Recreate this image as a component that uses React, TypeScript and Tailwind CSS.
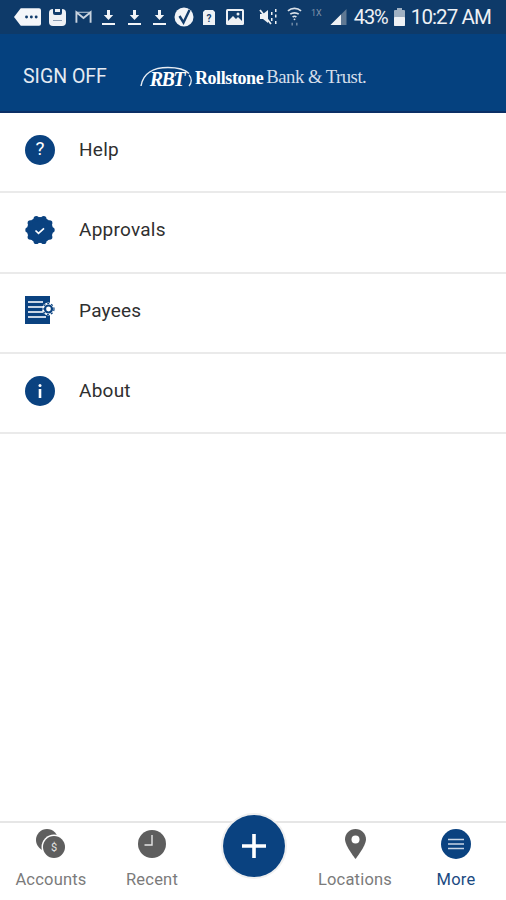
import React from "react";

const NAVY = "#0a4280";

function Download() {
  return (
    <svg width="15" height="17" viewBox="0 0 15 17" fill="#f1f4f8" className="shrink-0">
      <path d="M6 1h3v5h3.200L7.500 11 2.800 6H6z" />
      <rect x="1" y="14" width="13" height="2" />
    </svg>
  );
}

function StatusLeft() {
  return (
    <div className="flex shrink-0 items-center">
      <svg width="27" height="20" viewBox="0 0 28 20" className="ml-[14px] shrink-0">
        <path d="M7 1h19a2 2 0 0 1 2 2v14a2 2 0 0 1-2 2H7L0 10z" fill="#f4f6f9" />
        <circle cx="13" cy="10" r="1.500" fill="#123d6c" />
        <circle cx="18" cy="10" r="1.500" fill="#123d6c" />
        <circle cx="23" cy="10" r="1.500" fill="#123d6c" />
      </svg>
      <svg width="17" height="19" viewBox="0 0 17 19" className="ml-[8px] shrink-0">
        <rect x="0" y="1" width="17" height="17" rx="4" fill="#eef1f5" />
        <path d="M4 1h9v4a2 2 0 0 1-2 2H6a2 2 0 0 1-2-2z" fill="#123d6c" />
        <rect x="6" y="1" width="5" height="3" fill="#eef1f5" />
        <rect x="4" y="12" width="9" height="1" fill="#8b9db3" />
      </svg>
      <svg width="17" height="14" viewBox="0 0 18 14" className="ml-[9px] shrink-0" fill="none" stroke="#c9d3df" strokeWidth="2">
        <path d="M1.500 13V2l7.500 6 7.500-6v11" />
        <path d="M1.500 2h15" strokeWidth="1" />
      </svg>
      <div className="ml-[9px] flex w-[66px] shrink-0 justify-between">
        <Download />
        <Download />
        <Download />
      </div>
      <svg width="20" height="20" viewBox="0 0 20 20" className="ml-[7px] shrink-0">
        <circle cx="10" cy="10" r="9.500" fill="#f1f4f8" />
        <path d="M5.500 9l4 6.500L15.500 3" fill="none" stroke="#123d6c" strokeWidth="2.400" />
      </svg>
      <svg width="14" height="17" viewBox="0 0 14 17" className="ml-[8px] shrink-0">
        <path d="M3 1h8l2 2v13H1V3z" fill="#eef1f5" />
        <text x="7" y="13" fontSize="10" fontWeight="700" textAnchor="middle" fill="#123d6c" fontFamily="Roboto, sans-serif">?</text>
      </svg>
      <svg width="18" height="16" viewBox="0 0 18 16" className="ml-[10px] shrink-0">
        <rect x="0" y="0" width="18" height="16" rx="1.500" fill="#eef1f5" />
        <rect x="2" y="2" width="14" height="10" fill="#123d6c" />
        <path d="M2 12l5-5 3 3 2-2 4 4z" fill="#eef1f5" />
        <circle cx="12" cy="5" r="1.500" fill="#eef1f5" />
      </svg>
    </div>
  );
}

function StatusRight() {
  return (
    <div className="flex shrink-0 items-center whitespace-nowrap">
      <svg width="20" height="18" viewBox="0 0 20 18" fill="#eef1f5" className="shrink-0">
        <path d="M1 6h3l5-4v13l-5-4H1z" />
        <path d="M1 2l11 14" stroke="#eef1f5" strokeWidth="1.800" />
        <path d="M12 4h1.500v3H12zM12 10h1.500v3H12zM16 1h1.500v3H16zM16 6.500h1.500v3H16zM16 13h1.500v3H16z" />
      </svg>
      <svg width="15" height="22" viewBox="0 0 16 22" className="ml-[8px] shrink-0" fill="none" stroke="#d9e0e8" strokeWidth="1.800">
        <path d="M1 4.500c4-3.500 10-3.500 14 0" />
        <path d="M3.500 8c2.500-2 6.500-2 9 0" />
        <path d="M6 11c1-.8 3-.8 4 0" />
        <circle cx="8" cy="13.500" r="1" fill="#d9e0e8" stroke="none" />
        <path d="M5.500 20v-3M10.500 20v-3" stroke="#8fa2b8" strokeWidth="1.200" />
      </svg>
      <span className="ml-[9px] mb-[8px] font-['Roboto',sans-serif] text-[9px] leading-none text-[#7e93ab]">1X</span>
      <svg width="17" height="18" viewBox="0 0 17 18" className="ml-[8px] shrink-0">
        <path d="M16.500 1v16H0.500z" fill="#5f7893" />
        <path d="M11 6.500V17H0.500z" fill="#eef1f5" />
      </svg>
      <span className="ml-[7px] font-['Roboto',sans-serif] text-[20px] leading-none tracking-[-1px] text-[#eef1f5]">43%</span>
      <svg width="11" height="18" viewBox="0 0 11 18" className="ml-[6px] shrink-0">
        <rect x="3" y="0" width="5" height="2" fill="#9fb0c2" />
        <rect x="0" y="2" width="11" height="16" rx="1" fill="#9fb0c2" />
        <rect x="0" y="9" width="11" height="9" rx="1" fill="#eef1f5" />
      </svg>
      <span className="ml-[6px] font-['Roboto',sans-serif] text-[20.500px] leading-none tracking-[-0.9px] text-[#eef1f5]">10:27 AM</span>
    </div>
  );
}

function Logo() {
  return (
    <div className="ml-[33px] flex items-center whitespace-nowrap text-white font-['Liberation_Serif',serif]">
      <div className="relative flex h-[24px] w-[54px] items-center justify-center">
        <svg width="54" height="24" viewBox="0 0 54 24" fill="none" stroke="#e8edf4" className="absolute inset-0">
          <path d="M1 21C3 8 14 2.500 28 2.500c10 0 17 2 21 6" strokeWidth="1.500" />
          <path d="M49 10c3 3 3 8 0 11" strokeWidth="1.300" />
        </svg>
        <span className="relative mt-[5px] text-[20px] font-bold italic leading-none tracking-[-1.500px]">RBT</span>
      </div>
      <span className="ml-[1px] mt-[2px] text-[18px] font-bold leading-none tracking-[-0.4px]">Rollstone</span>
      <span className="ml-[3px] mt-[2px] text-[18.700px] leading-none tracking-[-0.5px] text-[#d5deea]">Bank &amp; Trust.</span>
    </div>
  );
}

function HelpIcon() {
  return (
    <div className="flex h-[30px] w-[30px] items-center justify-center rounded-full bg-[#0a4280] font-['Roboto',sans-serif] text-[19px] font-normal text-white">?</div>
  );
}

function ApprovalIcon() {
  const bumps = Array.from({ length: 10 }, (_, i) => {
    const a = (i * Math.PI) / 5;
    return <circle key={i} cx={15 + 12 * Math.cos(a)} cy={15 + 12 * Math.sin(a)} r="2.700" fill={NAVY} />;
  });
  return (
    <svg width="30" height="30" viewBox="0 0 30 30">
      <circle cx="15" cy="15" r="13" fill={NAVY} />
      {bumps}
      <path d="M10.500 15.500l3 2.800 5.500-5" fill="none" stroke="#fff" strokeWidth="1.700" />
    </svg>
  );
}

function PayeeIcon() {
  return (
    <svg width="30" height="28" viewBox="0 0 30 28">
      <rect x="0" y="0" width="25" height="28" fill={NAVY} />
      <rect x="3" y="5" width="15" height="2" fill="#c8d5e5" />
      <rect x="3" y="10" width="18" height="2" fill="#c8d5e5" />
      <rect x="3" y="15" width="15" height="2" fill="#c8d5e5" />
      <rect x="3" y="20" width="18" height="2" fill="#c8d5e5" />
      <circle cx="23.500" cy="13" r="6.500" fill="#fff" />
      <circle cx="23.500" cy="13" r="3.500" fill="none" stroke={NAVY} strokeWidth="2.200" />
      <circle cx="23.500" cy="13" r="5.500" fill="none" stroke={NAVY} strokeWidth="1.200" strokeDasharray="2 2" />
    </svg>
  );
}

function InfoIcon() {
  return (
    <svg width="30" height="30" viewBox="0 0 30 30">
      <circle cx="15" cy="15" r="15" fill={NAVY} />
      <circle cx="15" cy="9.500" r="1.500" fill="#fff" />
      <rect x="13.700" y="13" width="2.600" height="9" fill="#fff" />
    </svg>
  );
}

function Row({ icon, label }: { icon: React.ReactNode; label: string }) {
  return (
    <div className="flex h-[80.300px] items-center border-b-2 border-[#eaeaea] pb-[5px] pl-[25px]">
      <div className="flex w-[30px] items-center justify-center">{icon}</div>
      <span className="ml-[24px] font-['Roboto',sans-serif] text-[19px] leading-none tracking-[0.25px] text-[#2f2f2f]">{label}</span>
    </div>
  );
}

function Tab({ icon, label, active, className }: { icon: React.ReactNode; label: string; active?: boolean; className: string }) {
  return (
    <div className={`flex flex-col items-center ${className}`}>
      <div className="flex h-[32px] items-center justify-center">{icon}</div>
      <span className={`mt-[12px] font-['Roboto',sans-serif] text-[16.500px] leading-none tracking-[0.2px] ${active ? "text-[#1b4a82]" : "text-[#7b7b7b]"}`}>{label}</span>
    </div>
  );
}

export default function App() {
  return (
    <div className="relative flex h-[900px] w-[506px] flex-col overflow-hidden bg-white">
      <div className="flex h-[34px] items-center justify-between bg-[#0e3a69] pr-[15px]">
        <StatusLeft />
        <StatusRight />
      </div>
      <div className="flex h-[79px] items-center border-b-2 border-[#0b2f66] bg-[#05417f] pl-[23px] pt-[8px]">
        <span className="whitespace-nowrap font-['Roboto',sans-serif] text-[19.500px] leading-none text-[#e6ebf2]">SIGN OFF</span>
        <Logo />
      </div>
      <Row icon={<HelpIcon />} label="Help" />
      <Row icon={<ApprovalIcon />} label="Approvals" />
      <Row icon={<PayeeIcon />} label="Payees" />
      <Row icon={<InfoIcon />} label="About" />
      <div className="flex-1" />
      <div className="flex h-[79px] border-t-2 border-[#e6e6e6] pt-[5px]">
        <Tab
          className="w-[102px]"
          label="Accounts"
          icon={
            <svg width="32" height="32" viewBox="0 0 32 32">
              <circle cx="12" cy="12" r="11" fill="#5e5e5e" />
              <circle cx="19" cy="19" r="12.500" fill="#fff" />
              <circle cx="19" cy="19" r="11" fill="#5e5e5e" />
              <text x="19" y="23" fontSize="11" textAnchor="middle" fill="#e5e5e5" fontFamily="Roboto, sans-serif">$</text>
            </svg>
          }
        />
        <Tab
          className="w-[100px]"
          label="Recent"
          icon={
            <svg width="28" height="28" viewBox="0 0 28 28">
              <circle cx="14" cy="14" r="14" fill="#5e5e5e" />
              <path d="M14 5v10H6.500" fill="none" stroke="#e5e5e5" strokeWidth="1.400" />
            </svg>
          }
        />
        <div className="w-[102px]" />
        <Tab
          className="w-[102px]"
          label="Locations"
          icon={
            <svg width="21" height="30" viewBox="0 0 21 30">
              <path d="M10.500 0C4.700 0 0 4.600 0 10.300 0 17 10.500 30 10.500 30S21 17 21 10.300C21 4.600 16.300 0 10.500 0z" fill="#5e5e5e" />
              <circle cx="10.500" cy="10.500" r="4" fill="#fff" />
            </svg>
          }
        />
        <Tab
          className="w-[100px]"
          label="More"
          active
          icon={
            <svg width="30" height="30" viewBox="0 0 30 30">
              <circle cx="15" cy="15" r="15" fill={NAVY} />
              <path d="M7 10.500h16M7 15h16M7 19.500h16" stroke="#c8d5e5" strokeWidth="1.600" />
            </svg>
          }
        />
      </div>
      <div className="absolute left-[221px] top-[813px] flex h-[66px] w-[66px] items-center justify-center rounded-full border-2 border-[#f0f0f0] bg-white">
        <div className="flex h-[62px] w-[62px] items-center justify-center rounded-full bg-[#0a4280]">
          <svg width="26" height="26" viewBox="0 0 26 26">
            <path d="M13 1v24M1 13h24" stroke="#fff" strokeWidth="3.600" />
          </svg>
        </div>
      </div>
    </div>
  );
}
